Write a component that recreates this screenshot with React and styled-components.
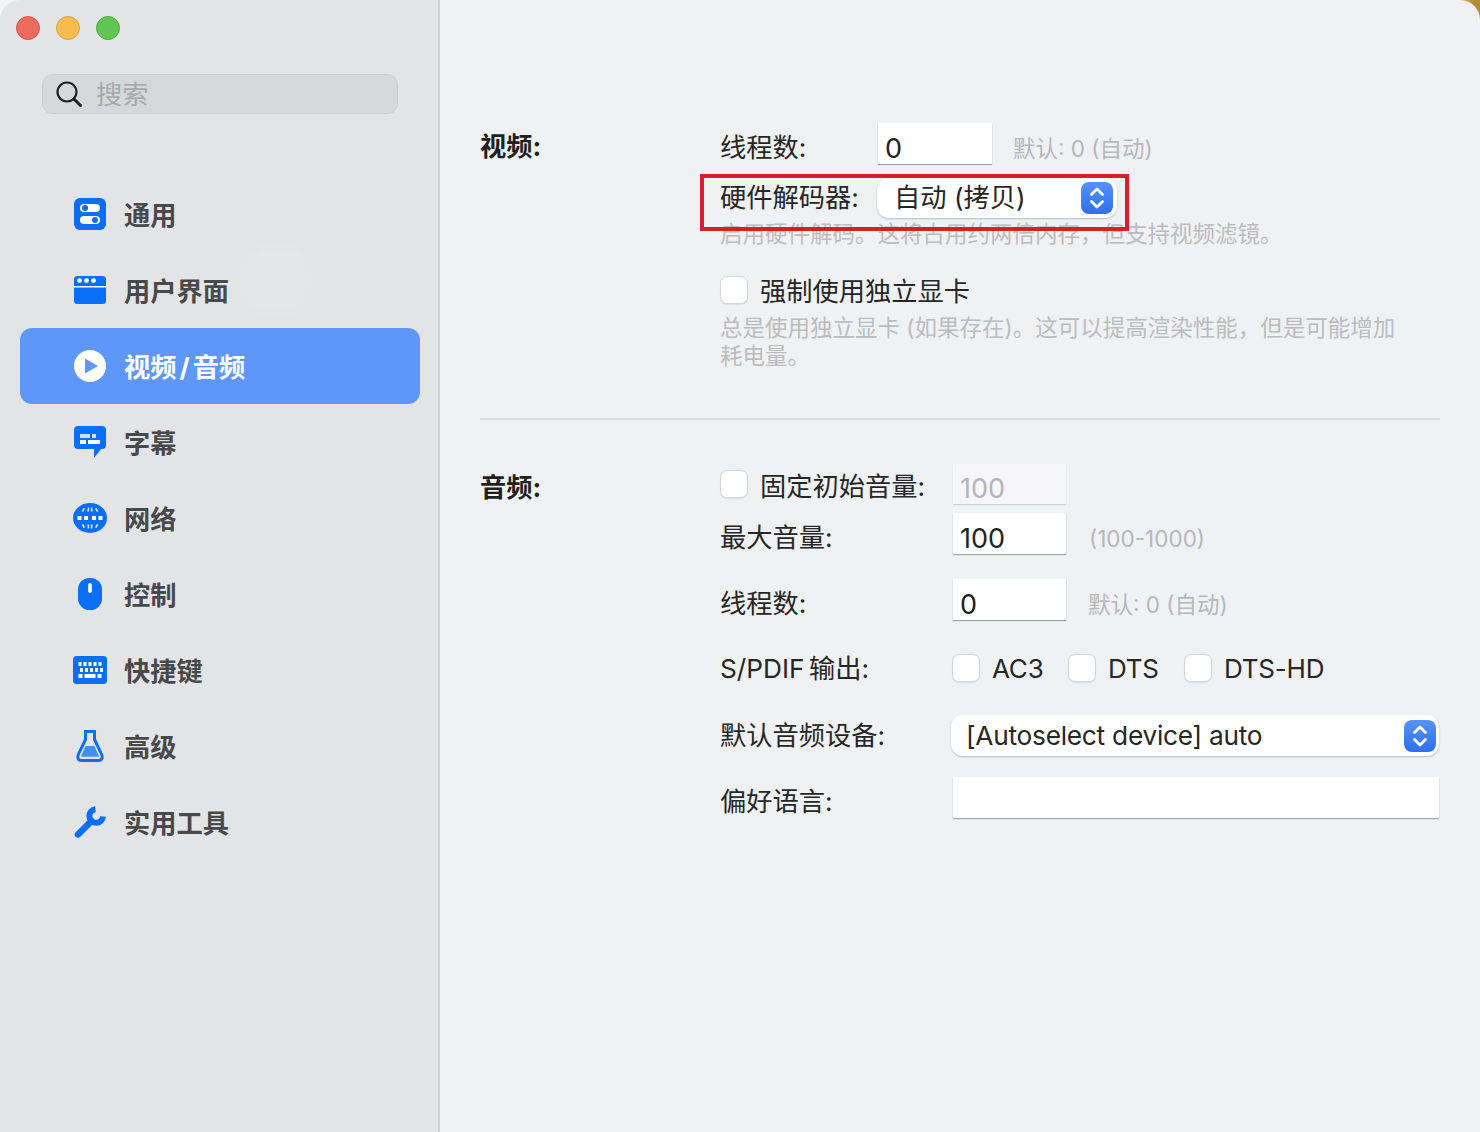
import styled, { createGlobalStyle } from "styled-components";

const blue = "#0a6ef7";

const GlobalStyle = createGlobalStyle`
  html, body {
    margin: 0;
    padding: 0;
    background: linear-gradient(90deg, #f4f4f4 0 1440px, #b58a35 1474px);
  }
  * { box-sizing: border-box; }
`;

const Window = styled.div`
  display: flex;
  width: 1480px;
  height: 1132px;
  overflow: hidden;
  border-radius: 20px 20px 0 0;
  font-family: Inter, "Noto Sans CJK SC", sans-serif;
  color: #262626;
`;

const Sidebar = styled.aside`
  flex: 0 0 440px;
  padding: 16px 18px 0 20px;
  border-right: 2px solid #d0d1d3;
  background:
    radial-gradient(circle at 275px 280px, #e5e7e9 0, #e5e7e9 26px, rgba(229, 231, 233, 0) 42px),
    #e3e4e6;
`;

const Lights = styled.div`
  display: flex;
  gap: 16px;
  margin-left: -4px;
`;

const Light = styled.span`
  width: 24px;
  height: 24px;
  border-radius: 50%;
  background: ${(props) => props.color};
  border: 1px solid ${(props) => props.edge};
`;

const Search = styled.div`
  display: flex;
  align-items: center;
  gap: 13px;
  width: 356px;
  height: 40px;
  margin: 34px 0 62px 22px;
  padding-left: 12px;
  border: 1px solid #cfd0d2;
  border-radius: 10px;
  background: #d6d7d9;
  font-size: 26.25px;
  line-height: 38px;
  color: #a8a9ab;

  span { padding-top: 2px; }
`;

const Nav = styled.nav`
  display: flex;
  flex-direction: column;
`;

const NavItem = styled.div`
  display: flex;
  align-items: center;
  gap: 18px;
  height: 76px;
  padding-left: 54px;
  border-radius: 12px;
  background: ${(props) => (props.$active ? "#5f97f8" : "transparent")};
  color: ${(props) => (props.$active ? "#ffffff" : "#48494b")};
  font-size: 26.25px;
  font-weight: 700;
  line-height: 34px;
`;

const NavLabel = styled.span`
  padding-top: 4px;
`;

const IconBox = styled.span`
  display: flex;
  align-items: center;
  justify-content: center;
  width: 32px;
  height: 36px;
  color: ${blue};
  svg { flex: none; display: block; }
`;

const Slash = styled.span`
  margin: 0 3px;
`;

const Main = styled.main`
  flex: 1;
  padding: 123px 40px 0;
  background: #f0f1f3;
`;

const Section = styled.section`
  display: grid;
  grid-template-columns: 240px 1fr;
`;

const SectionTitle = styled.h2`
  margin: 0;
  font-size: 26.25px;
  font-weight: 700;
  line-height: 48px;
  color: #1f1f1f;
`;

const Fields = styled.div`
  display: flex;
  flex-direction: column;
`;

const Row = styled.div`
  position: relative;
  display: flex;
  align-items: center;
  margin-top: ${(props) => props.$top || 0}px;
`;

const Label = styled.div`
  display: flex;
  align-items: center;
  gap: 12px;
  flex: 0 0 ${(props) => props.$width}px;
  padding-top: ${(props) => (props.$drop || 0) * 2}px;
  font-size: 26.25px;
  line-height: ${(props) => 28 - (props.$drop || 0) * 2}px;
  word-spacing: ${(props) => props.$wordGap || 0}px;
  white-space: nowrap;
`;

const CheckText = styled.span`
  padding-top: ${(props) => props.$drop * 2}px;
  line-height: ${(props) => 28 - props.$drop * 2}px;
`;

const TextBox = styled.div`
  flex: none;
  width: ${(props) => props.$width}px;
  height: ${(props) => props.$height || 41}px;
  padding: 6px 0 0 7px;
  background: ${(props) => (props.$disabled ? "#f6f6f8" : "#ffffff")};
  box-shadow: 0 1px 1px rgba(0, 0, 0, ${(props) => (props.$disabled ? 0.14 : 0.32)});
  color: ${(props) => (props.$disabled ? "#b4b5b7" : "#222222")};
  font-size: 27px;
  line-height: ${(props) => (props.$height || 41) - 2}px;
`;

const Hint = styled.div`
  margin-left: ${(props) => props.$left}px;
  font-size: 22.5px;
  line-height: 30px;
  padding-top: 10px;
  color: #b6b7b9;
`;

const Description = styled.p`
  width: 680px;
  margin: ${(props) => props.$top}px 0 0;
  font-size: 22.5px;
  line-height: 28px;
  color: #bbbcbe;
`;

const CheckBox = styled.span`
  flex: none;
  width: 28px;
  height: 28px;
  border: 1px solid #d4d5d7;
  border-radius: 7px;
  background: #ffffff;
  box-shadow: 0 1px 1px rgba(0, 0, 0, 0.08);
`;

const Checks = styled.div`
  display: grid;
  grid-template-columns: repeat(3, 116px);
  margin-left: -1px;
`;

const CheckItem = styled.div`
  display: flex;
  align-items: center;
  gap: 12px;
  font-size: 26px;
  letter-spacing: -0.2px;
  white-space: nowrap;
`;

const Select = styled.div`
  flex: none;
  display: flex;
  align-items: center;
  justify-content: space-between;
  width: ${(props) => props.$width}px;
  height: ${(props) => props.$height}px;
  margin-left: ${(props) => props.$left || 0}px;
  padding: 0 ${(props) => props.$right}px 0 ${(props) => props.$pad}px;
  border-radius: 12px;
  background: #ffffff;
  box-shadow: 0 1px 2px rgba(0, 0, 0, 0.22);
  font-size: 26.25px;
  line-height: 34px;
  letter-spacing: ${(props) => props.$tracking || 0}px;
`;

const Stepper = styled.span`
  display: flex;
  flex: none;
  align-items: center;
  justify-content: center;
  width: 32px;
  height: 32px;
  border-radius: 8px;
  background: linear-gradient(180deg, #5793f7, #2d70ee);
`;

const Divider = styled.hr`
  height: 2px;
  margin: 48px 0 44px;
  border: none;
  background: #d9dadc;
`;

const Annotation = styled.div`
  position: absolute;
  left: -20px;
  top: -4px;
  width: 429px;
  height: 57px;
  border: 4px solid #df1a2c;
  pointer-events: none;
`;

const SliderGlyph = () => (
  <svg width="32" height="32" viewBox="0 0 32 32">
    <rect width="32" height="32" rx="6" fill="currentColor" />
    <rect x="6" y="6" width="20" height="8" rx="4" fill="#fff" />
    <rect x="6" y="18" width="20" height="8" rx="4" fill="#fff" />
    <circle cx="11" cy="10" r="3" fill="currentColor" />
    <circle cx="21" cy="22" r="3" fill="currentColor" />
  </svg>
);

const WindowGlyph = () => (
  <svg width="32" height="28" viewBox="0 0 32 28">
    <rect width="32" height="28" rx="3.5" fill="currentColor" />
    <rect y="10" width="32" height="1.5" fill="#fff" />
    <circle cx="5.5" cy="4.6" r="2.4" fill="#fff" />
    <circle cx="12.5" cy="4.6" r="2.4" fill="#fff" />
    <circle cx="19.5" cy="4.6" r="2.4" fill="#fff" />
  </svg>
);

const PlayGlyph = () => (
  <svg width="32" height="32" viewBox="0 0 32 32">
    <circle cx="16" cy="16" r="16" fill="#fff" />
    <path d="M11 8.5 L24 16 L11 23.5 Z" fill="#5f97f8" />
  </svg>
);

const BubbleGlyph = () => (
  <svg width="32" height="32" viewBox="0 0 32 32">
    <path d="M4 0 H28 a4 4 0 0 1 4 4 V19 a4 4 0 0 1 -4 4 H27 L20 32 V23 H4 a4 4 0 0 1 -4 -4 V4 a4 4 0 0 1 4 -4 Z" fill="currentColor" />
    <rect x="6" y="8" width="10" height="4" fill="#cfe0fb" />
    <rect x="18" y="8" width="4" height="4" fill="#cfe0fb" />
    <rect x="6" y="14" width="6" height="4" fill="#fff" />
    <rect x="14" y="14" width="12" height="4" fill="#fff" />
  </svg>
);

const GlobeGlyph = () => (
  <svg width="34" height="30" viewBox="0 0 34 30">
    <ellipse cx="17" cy="15" rx="17" ry="15" fill="currentColor" />
    <g fill="#fff">
      {[4.5, 11, 19, 25.5].map((x) => (
        <rect key={x} x={x} y="13" width="4" height="4" />
      ))}
    </g>
    <g fill="#cfe0fb">
      <path d="M8.5 8.5 L10.5 5 L12 5.6 L10.8 8.5 Z" />
      <path d="M14.2 8.5 L14.8 4.4 L16.2 4.4 L16.2 8.5 Z" />
      <path d="M19.8 8.5 L19.2 4.4 L17.8 4.4 L17.8 8.5 Z" />
      <path d="M25.5 8.5 L23.5 5 L22 5.6 L23.2 8.5 Z" />
      <path d="M8.5 21.5 L10.5 25 L12 24.4 L10.8 21.5 Z" />
      <path d="M14.2 21.5 L14.8 25.6 L16.2 25.6 L16.2 21.5 Z" />
      <path d="M19.8 21.5 L19.2 25.6 L17.8 25.6 L17.8 21.5 Z" />
      <path d="M25.5 21.5 L23.5 25 L22 24.4 L23.2 21.5 Z" />
    </g>
  </svg>
);

const MouseGlyph = () => (
  <svg width="24" height="32" viewBox="0 0 24 32">
    <rect width="24" height="32" rx="11.5" fill="currentColor" />
    <rect x="10.2" y="5" width="3.6" height="10" rx="1.8" fill="#fff" />
  </svg>
);

const KeyboardGlyph = () => {
  const rows = [
    { y: 6, keys: [[5.5, 3], [10.5, 3], [15.5, 3], [20.5, 3], [25.5, 3]] },
    { y: 12, keys: [[7, 3], [12, 3], [17, 3], [22, 3], [27, 3]] },
    { y: 18, keys: [[5.5, 4], [11.5, 11], [24.5, 4]] },
  ];
  return (
    <svg width="34" height="28" viewBox="0 0 34 28">
      <rect width="34" height="28" rx="3.5" fill="currentColor" />
      {rows.map((row) =>
        row.keys.map(([x, w]) => (
          <rect key={`${row.y}-${x}`} x={x} y={row.y} width={w} height="4" fill="#fff" />
        ))
      )}
    </svg>
  );
};

const FlaskGlyph = () => (
  <svg width="28" height="32" viewBox="0 0 28 32">
    <path d="M8 0 H20 V9 L27 24 C28.6 28 27 32 23 32 H5 C1 32 -0.6 28 1 24 L8 9 Z" fill="currentColor" />
    <path d="M11 3 H17 V10 L24.4 25 C25.4 27.4 24.4 29 22.5 29 H5.5 C3.6 29 2.6 27.4 3.6 25 L11 10 Z" fill="#e3e4e6" />
    <path d="M9.6 16 H18.4 L23.2 26.8 H4.8 Z" fill="#428ef8" />
  </svg>
);

const WrenchGlyph = () => (
  <svg width="32" height="32" viewBox="0 0 32 32" fill="none" stroke="currentColor">
    <path d="M4 28.5 L17.5 15" strokeWidth="6.6" strokeLinecap="round" />
    <path d="M21.5 3.2 A6.8 6.8 0 1 0 29 10.5" strokeWidth="6" />
  </svg>
);

const SearchGlyph = () => (
  <svg width="28" height="28" viewBox="0 0 28 28" fill="none" stroke="#1d1d1f">
    <circle cx="12" cy="12" r="9.5" strokeWidth="2.2" />
    <path d="M19 19 L25.5 25.5" strokeWidth="3" strokeLinecap="round" />
  </svg>
);

const ChevronGlyph = () => (
  <svg width="18" height="24" viewBox="0 0 18 24" fill="none" stroke="#fff" strokeWidth="2.8" strokeLinecap="round" strokeLinejoin="round">
    <path d="M3.5 8.5 L9 3 L14.5 8.5" />
    <path d="M3.5 15.5 L9 21 L14.5 15.5" />
  </svg>
);

const navItems = [
  { label: "通用", icon: <SliderGlyph /> },
  { label: "用户界面", icon: <WindowGlyph /> },
  { label: <>视频<Slash>/</Slash>音频</>, icon: <PlayGlyph />, active: true },
  { label: "字幕", icon: <BubbleGlyph /> },
  { label: "网络", icon: <GlobeGlyph /> },
  { label: "控制", icon: <MouseGlyph /> },
  { label: "快捷键", icon: <KeyboardGlyph /> },
  { label: "高级", icon: <FlaskGlyph /> },
  { label: "实用工具", icon: <WrenchGlyph /> },
];

const comma = "\uFF0C";

const App = () => (
  <>
    <GlobalStyle />
    <Window>
      <Sidebar>
        <Lights>
          <Light color="#ee6a5f" edge="#d5574c" />
          <Light color="#f5bd4f" edge="#d9a23b" />
          <Light color="#61c454" edge="#4fa944" />
        </Lights>
        <Search>
          <SearchGlyph />
          <span>搜索</span>
        </Search>
        <Nav>
          {navItems.map((item, i) => (
            <NavItem key={i} $active={item.active}>
              <IconBox>{item.icon}</IconBox>
              <NavLabel>{item.label}</NavLabel>
            </NavItem>
          ))}
        </Nav>
      </Sidebar>
      <Main>
        <Section>
          <SectionTitle>视频:</SectionTitle>
          <Fields>
            <Row>
              <Label $width={158} $drop={4}>线程数:</Label>
              <TextBox $width={114}>0</TextBox>
              <Hint $left={21}>默认: 0 (自动)</Hint>
            </Row>
            <Row $top={14}>
              <Label $width={157}>硬件解码器:</Label>
              <Select $width={240} $height={40} $pad={17} $right={4}>
                <span>自动 (拷贝)</span>
                <Stepper><ChevronGlyph /></Stepper>
              </Select>
              <Annotation />
            </Row>
            <Description $top={2}>{`启用硬件解码。这将占用约两倍内存${comma}但支持视频滤镜。`}</Description>
            <Row $top={28}>
              <Label>
                <CheckBox />
                <CheckText $drop={2}>强制使用独立显卡</CheckText>
              </Label>
            </Row>
            <Description $top={10}>
              {`总是使用独立显卡 (如果存在)。这可以提高渲染性能${comma}但是可能增加耗电量。`}
            </Description>
          </Fields>
        </Section>
        <Divider />
        <Section>
          <SectionTitle>音频:</SectionTitle>
          <Fields>
            <Row>
              <Label $width={233}>
                <CheckBox />
                <CheckText $drop={3}>固定初始音量:</CheckText>
              </Label>
              <TextBox $width={113} $height={40} $disabled>100</TextBox>
            </Row>
            <Row $top={9}>
              <Label $width={233} $drop={4}>最大音量:</Label>
              <TextBox $width={113}>100</TextBox>
              <Hint $left={23}>(100-1000)</Hint>
            </Row>
            <Row $top={25}>
              <Label $width={233} $drop={4}>线程数:</Label>
              <TextBox $width={113}>0</TextBox>
              <Hint $left={22}>默认: 0 (自动)</Hint>
            </Row>
            <Row $top={34}>
              <Label $width={233} $drop={1} $wordGap={-3}>S/PDIF 输出:</Label>
              <Checks>
                <CheckItem><CheckBox /><CheckText $drop={1}>AC3</CheckText></CheckItem>
                <CheckItem><CheckBox /><CheckText $drop={1}>DTS</CheckText></CheckItem>
                <CheckItem><CheckBox /><CheckText $drop={1}>DTS-HD</CheckText></CheckItem>
              </Checks>
            </Row>
            <Row $top={33}>
              <Label $width={233}>默认音频设备:</Label>
              <Select $width={488} $height={41} $left={-2} $pad={15} $right={3} $tracking={-0.25}>
                <span>[Autoselect device] auto</span>
                <Stepper><ChevronGlyph /></Stepper>
              </Select>
            </Row>
            <Row $top={21}>
              <Label $width={233} $drop={4}>偏好语言:</Label>
              <TextBox $width={486} />
            </Row>
          </Fields>
        </Section>
      </Main>
    </Window>
  </>
);

export default App;
